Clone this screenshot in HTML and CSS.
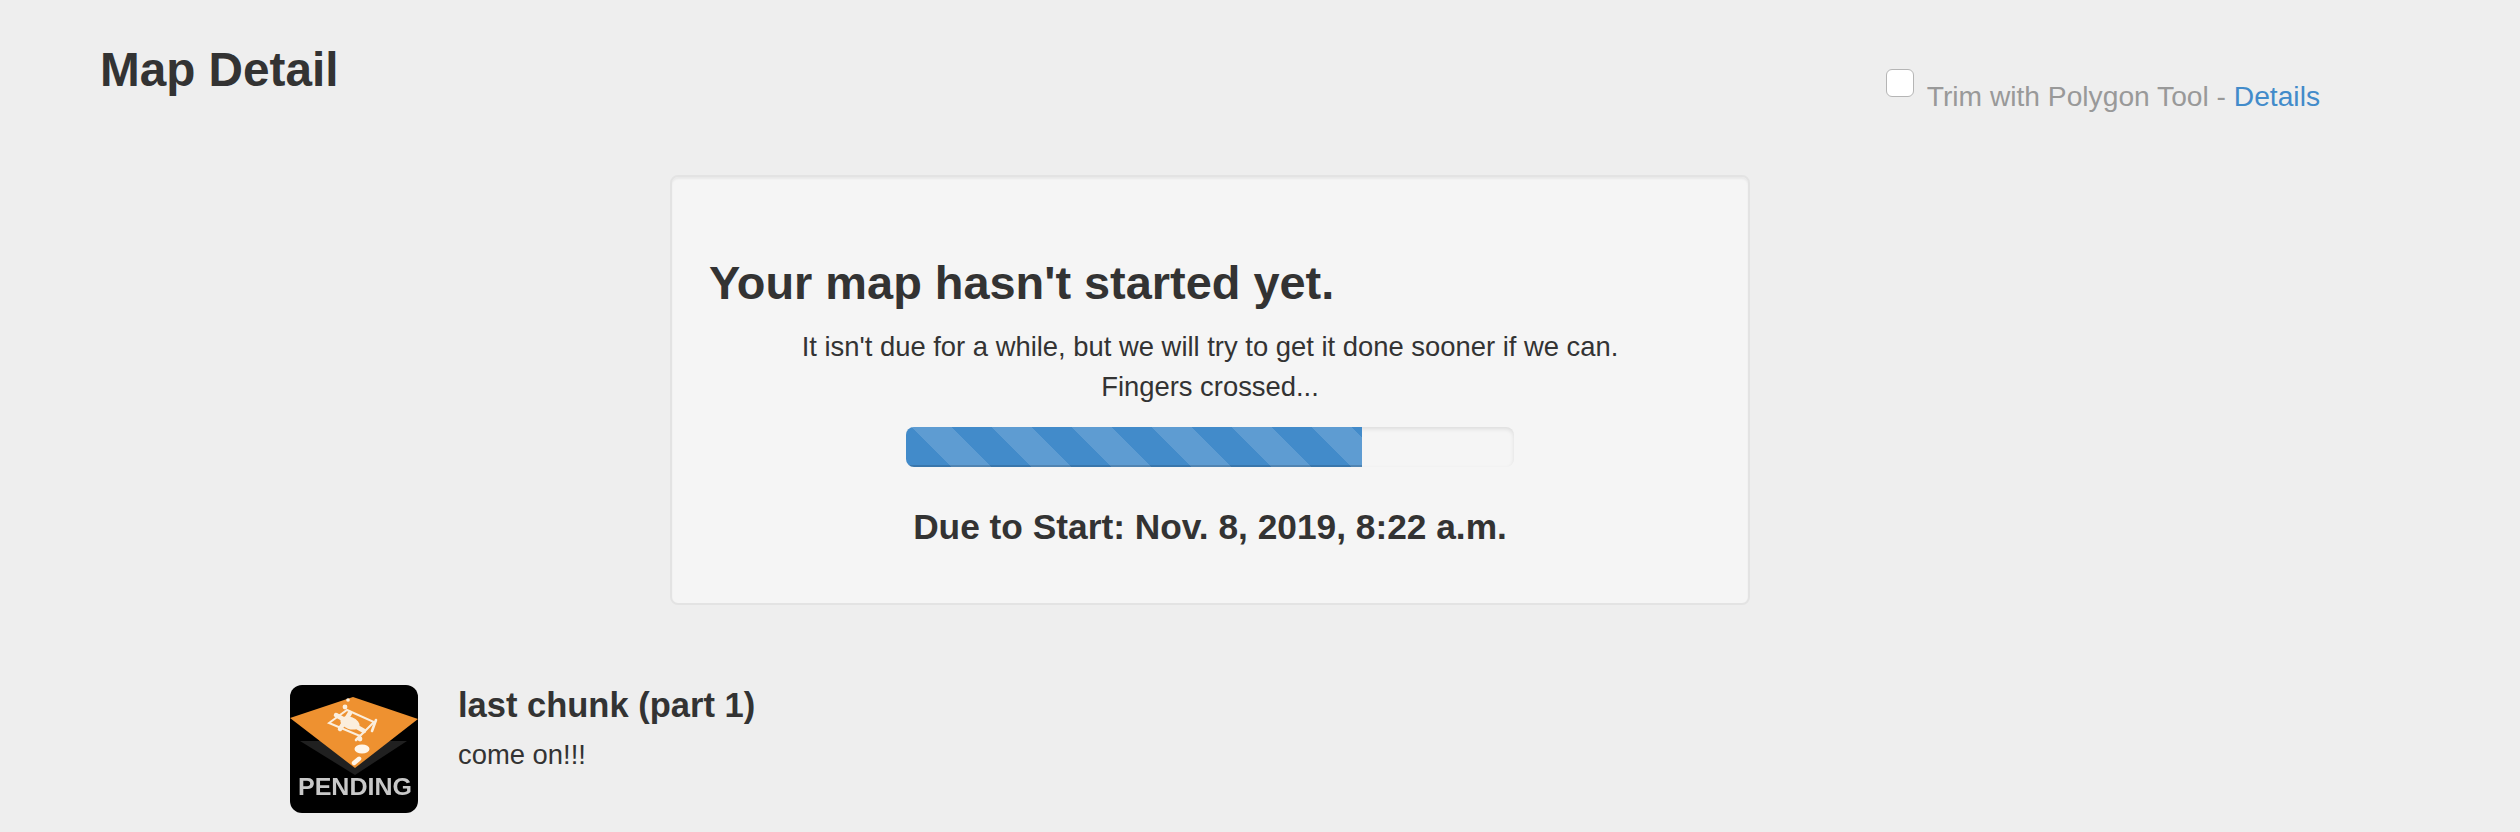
FILE: index.html
```html
<!DOCTYPE html>
<html lang="en">
<head>
<meta charset="utf-8">
<title>Map Detail</title>
<link rel="stylesheet" href="styles.css">
</head>
<body>
<header class="page-head">
  <h1 class="page-title">Map Detail</h1>
  <label class="trim">
    <input class="trim-check" type="checkbox">
    <span class="trim-label">Trim with Polygon Tool - <a class="trim-link" href="#">Details</a></span>
  </label>
</header>
<section class="well">
  <h2 class="well-title">Your map hasn't started yet.</h2>
  <p class="well-text">It isn't due for a while, but we will try to get it done sooner if we can.<br>Fingers crossed...</p>
  <div class="progress"><div class="progress-bar" style="width:75%"></div></div>
  <h3 class="due">Due to Start: Nov. 8, 2019, 8:22 a.m.</h3>
</section>
<article class="media">
  <svg class="thumb" viewBox="0 0 128 128" role="img" aria-label="Pending">
    <rect width="128" height="128" fill="#000"/>
    <g class="thumb-art">
      <polygon points="10,56 117,56 65,90" fill="#202020"/>
      <polygon points="63,12 128,34 65,83 0,33" fill="#ee9130"/>
      <g fill="none" stroke="#fbeedd" stroke-linecap="round">
        <polygon points="39,38 57,25 84,37 70,51" stroke-width="2"/>
        <path d="M46 30 L74 46 M60 28 L50 44" stroke-width="4.5"/>
        <path d="M82 46 L86 35 M70 51 L66 55" stroke-width="2.6"/>
      </g>
      <ellipse cx="60" cy="38" rx="10" ry="6" fill="#fbeedd" transform="rotate(20 60 38)"/>
      <circle cx="58" cy="15" r="1.8" fill="#fbeedd"/>
      <circle cx="55" cy="22" r="2.4" fill="#fbeedd"/>
      <circle cx="70" cy="54" r="2.4" fill="#fbeedd"/>
      <ellipse cx="72" cy="64" rx="7.5" ry="4.5" fill="#fff6ea"/>
      <rect x="61" y="74" width="11" height="4.5" rx="2.2" fill="#fff6ea" transform="rotate(-40 66 76)"/>
      <text class="thumb-text" x="8" y="110" textLength="114" lengthAdjust="spacingAndGlyphs">PENDING</text>
    </g>
  </svg>
  <div class="media-body">
    <h4 class="media-title">last chunk (part 1)</h4>
    <p class="media-text">come on!!!</p>
  </div>
</article>
</body>
</html>
```

FILE: styles.css
```css
* { box-sizing: border-box; }

html, body { margin: 0; height: 832px; overflow: hidden; }

body {
  background: #eeeeee;
  color: #333333;
  font-family: "Liberation Sans", Arial, sans-serif;
  font-size: 27.4px;
  line-height: 40px;
}

.page-head {
  display: flex;
  justify-content: space-between;
  align-items: flex-start;
  height: 175px;
  padding: 40px 200px 0 100px;
}

.page-title {
  margin: 0;
  font-size: 47.7px;
  line-height: 60px;
  font-weight: 700;
}

.trim {
  display: flex;
  align-items: flex-start;
  gap: 13px;
  padding-top: 30px;
  font-size: 28.2px;
  color: #999999;
}

.trim-label { margin-top: 6px; white-space: nowrap; }

.trim-check {
  appearance: none;
  width: 28px;
  height: 28px;
  margin: -1px 0 0;
  background: #ffffff;
  border: 1px solid #b5b5b5;
  border-radius: 6px;
}

.trim-link { color: #428bca; text-decoration: none; }

.well {
  width: 1080px;
  height: 430px;
  margin-left: 670px;
  padding: 76px 37px 0;
  background: #f5f5f5;
  border: 2px solid #e3e3e3;
  border-radius: 8px;
  box-shadow: inset 0 2px 2px rgba(0, 0, 0, 0.05);
}

.well-title {
  margin: 0 0 14px;
  font-size: 46.9px;
  line-height: 60px;
  font-weight: 700;
}

.well-text { margin: 0 0 20px; text-align: center; }

.progress {
  width: 608px;
  height: 40px;
  margin: 0 auto 40px;
  background: #f5f5f5;
  border-radius: 8px;
  overflow: hidden;
  box-shadow: inset 0 2px 4px rgba(0, 0, 0, 0.1);
}

.progress-bar {
  height: 100%;
  background-color: #428bca;
  background-image: linear-gradient(45deg,
    rgba(255, 255, 255, 0.15) 25%, transparent 25%,
    transparent 50%, rgba(255, 255, 255, 0.15) 50%,
    rgba(255, 255, 255, 0.15) 75%, transparent 75%, transparent);
  background-size: 80px 80px;
  background-position: 6px 0;
  box-shadow: inset 0 -2px 0 rgba(0, 0, 0, 0.15);
}

.due {
  margin: 0;
  font-size: 35.3px;
  line-height: 40px;
  font-weight: 700;
  text-align: center;
}

.media {
  display: flex;
  gap: 40px;
  margin: 80px 0 0 290px;
}

.thumb {
  flex: none;
  width: 128px;
  height: 128px;
  border-radius: 12px;
}

.thumb-art { filter: blur(0.5px); }

.thumb-text {
  font-family: "Liberation Sans", Arial, sans-serif;
  font-size: 24px;
  font-weight: 700;
  fill: #c8c8c8;
}

.media-title {
  margin: 0 0 10px;
  font-size: 34.5px;
  line-height: 40px;
  font-weight: 700;
}

.media-text { margin: 0; }
```
